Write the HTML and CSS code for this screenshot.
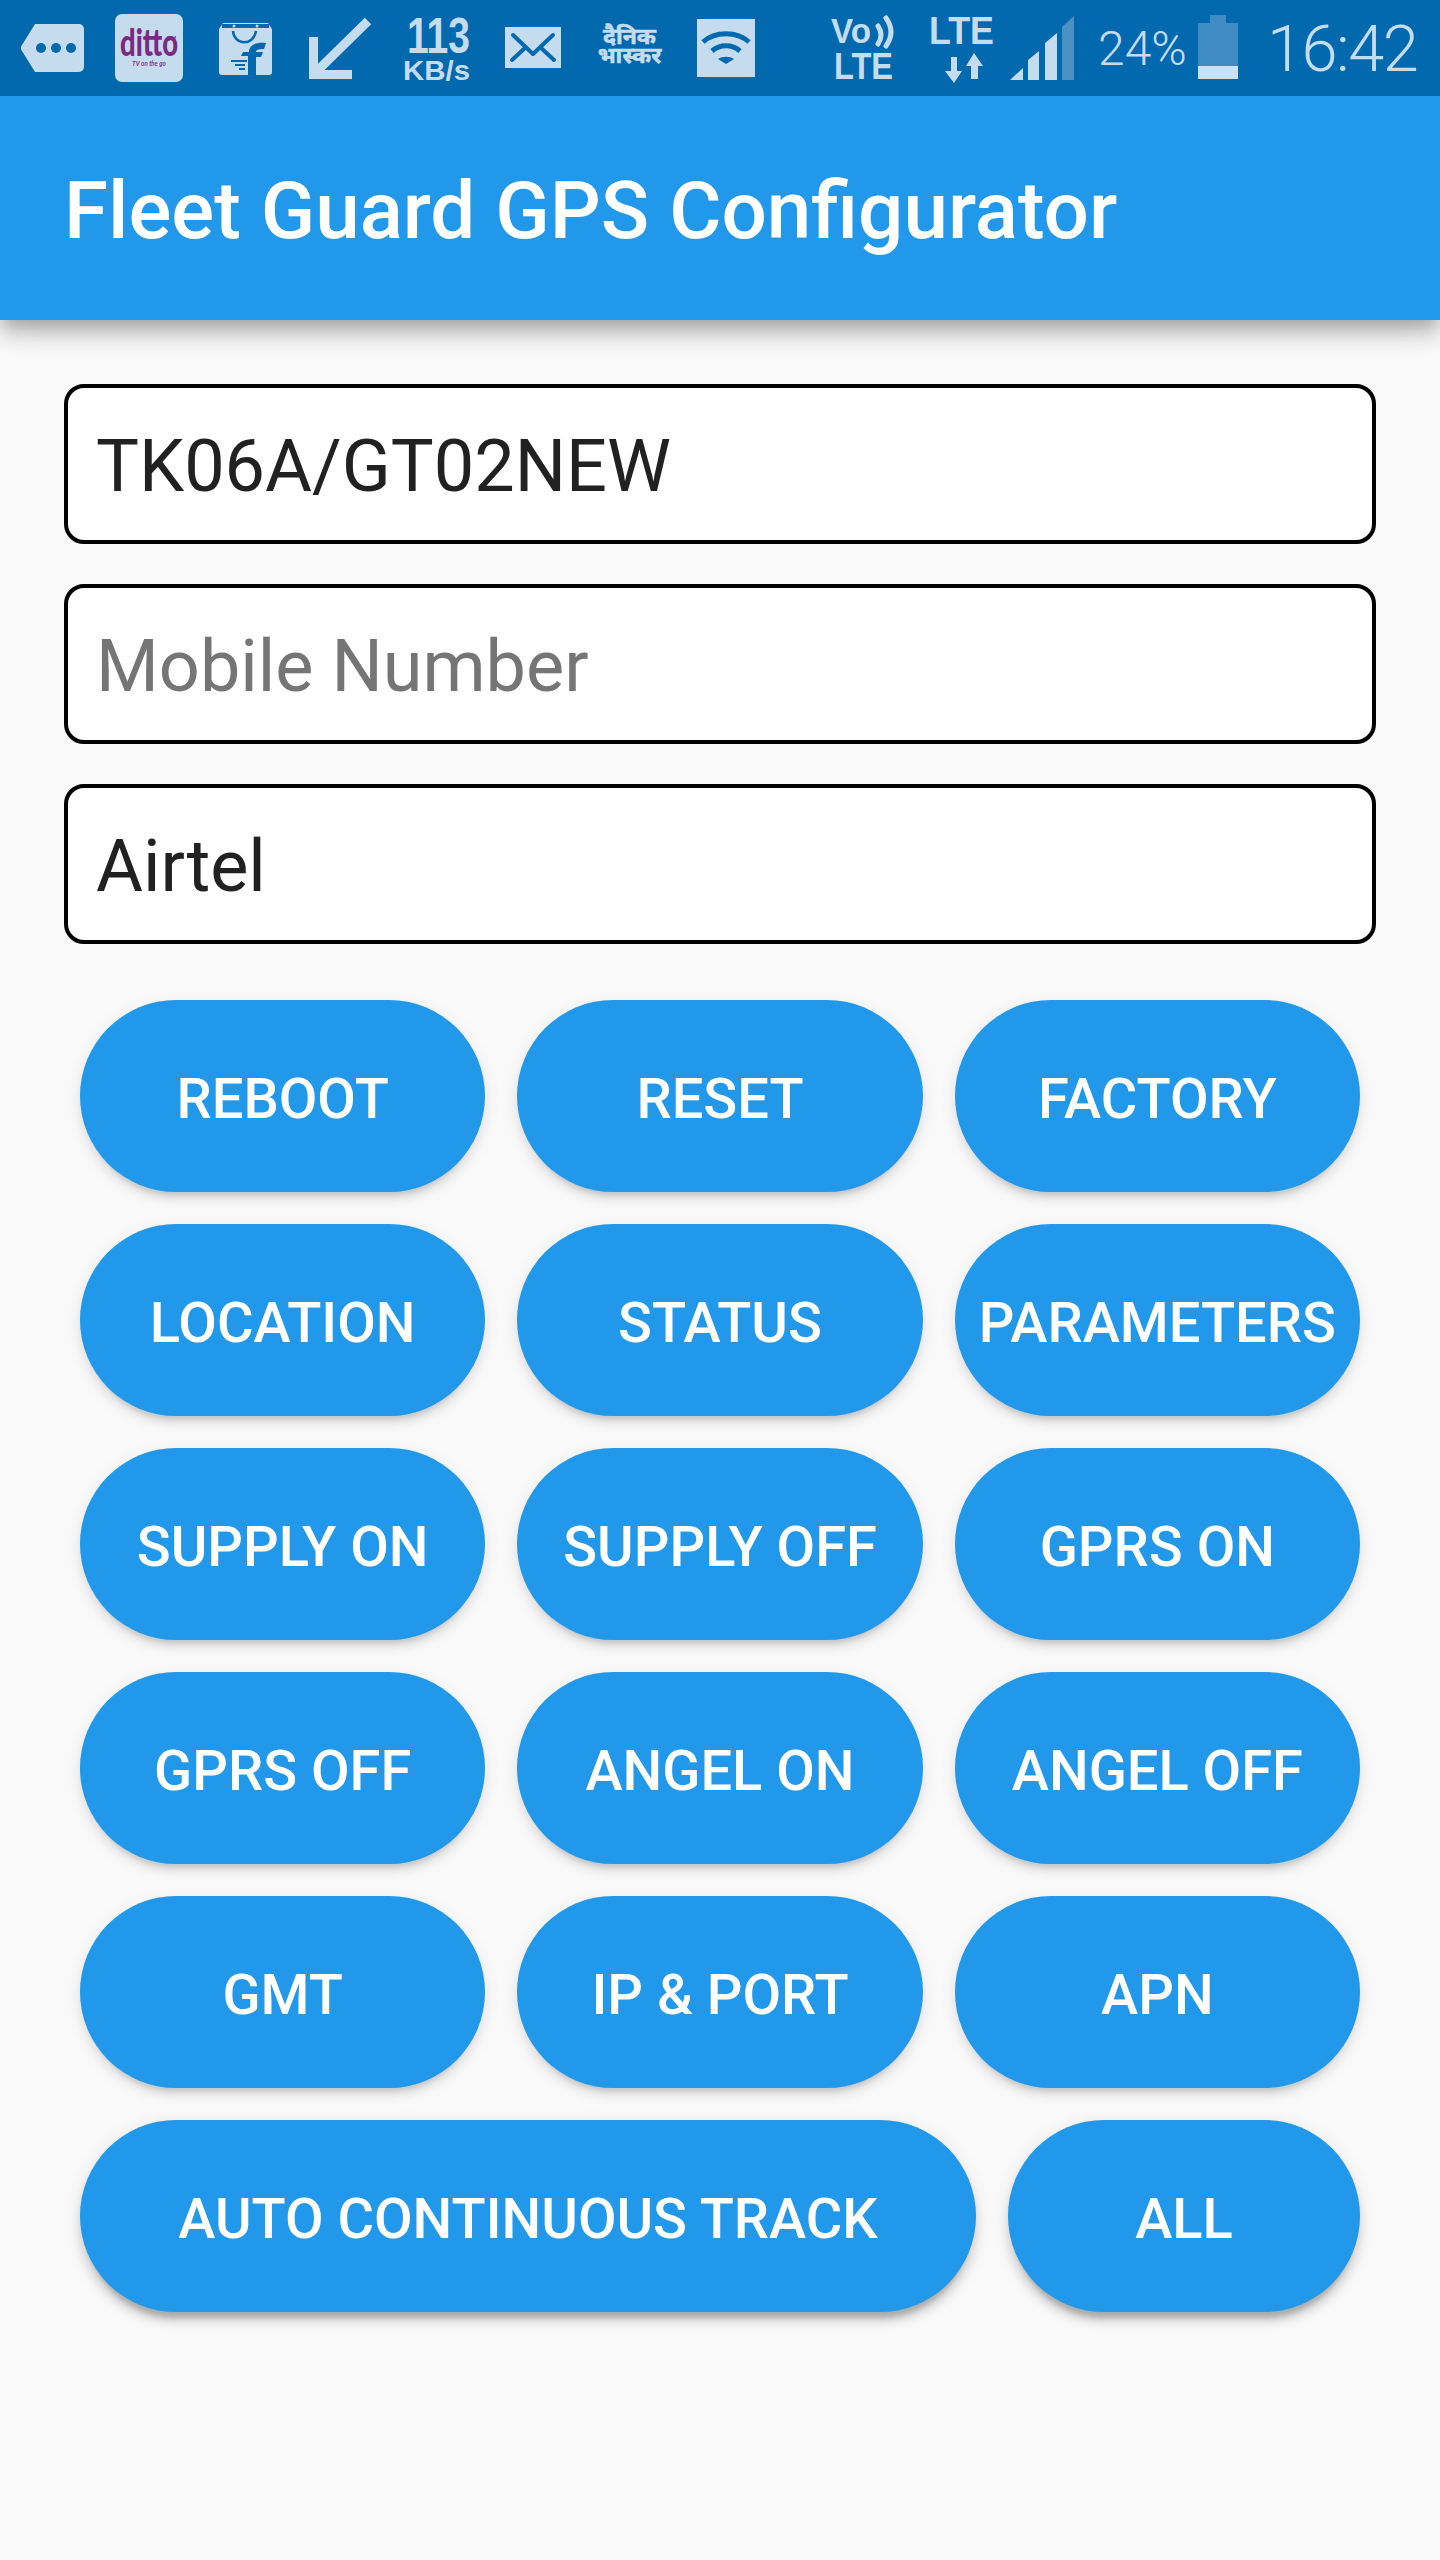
FILE: index.html
```html
<!DOCTYPE html>
<html lang="en">
<head>
<meta charset="utf-8">
<title>Fleet Guard GPS Configurator</title>
<link rel="stylesheet" href="styles.css">
</head>
<body>
<div class="status-bar">
  <svg class="si si-bubble" width="63" height="96" viewBox="0 0 63 96"><path class="lt" d="M14 24H58a5 5 0 0 1 5 5V67a5 5 0 0 1-5 5H14L1 51a5 5 0 0 1 0-6Z"/><circle class="dk" cx="20" cy="48" r="5"/><circle class="dk" cx="35" cy="48" r="5"/><circle class="dk" cx="50" cy="48" r="5"/></svg>
  <svg class="si si-ditto" width="68" height="96" viewBox="0 0 68 96"><rect class="lt" y="14" width="68" height="68" rx="7"/><text class="ditto" x="5" y="56" textLength="58" lengthAdjust="spacingAndGlyphs">ditto</text><text class="ditto-tv" x="52" y="41" textLength="9" lengthAdjust="spacingAndGlyphs">TV</text><text class="ditto-sub" x="17" y="66" textLength="34" lengthAdjust="spacingAndGlyphs">TV on the go</text></svg>
  <svg class="si si-flip" width="53" height="96" viewBox="0 0 53 96"><path class="lt" d="M0 29L4 23H49L53 29V72a3 3 0 0 1-3 3H3a3 3 0 0 1-3-3Z"/><path class="dk" d="M3 24H50V28H3Z"/><circle class="lt" cx="15" cy="26" r="1.5"/><circle class="lt" cx="38" cy="26" r="1.5"/><path class="dk-line" d="M14 31C15 46 35 46 37 31"/><path class="dk" d="M29 75V56H22L24 52H30C30 46 35 42 47 43L45 49C39 49 37 50 37 52H44L42 57H37V75Z"/><path class="dk" d="M12 60H28V62H12ZM16 64H26V66H16ZM20 68H26V70H20Z"/></svg>
  <svg class="si si-arrow" width="63" height="96" viewBox="0 0 63 96"><path class="lt-line" d="M4.500 37V74.500H43"/><path class="lt-line" d="M5 74L59 21"/></svg>
  <svg class="si si-speed" width="68" height="96" viewBox="0 0 68 96"><text class="speed-num" x="5" y="53" textLength="63" lengthAdjust="spacingAndGlyphs">113</text><text class="speed-unit" x="1" y="80" textLength="67" lengthAdjust="spacingAndGlyphs">KB/s</text></svg>
  <svg class="si si-mail" width="56" height="96" viewBox="0 0 56 96"><rect class="lt" y="27" width="56" height="41"/><path class="dk-thin" d="M8 35L28 54L48 35M7 60L21 47M49 60L35 47"/></svg>
  <div class="si si-dainik"><span>दैनिक</span><span>भास्कर</span></div>
  <svg class="si si-wifi" width="58" height="96" viewBox="0 0 58 96"><rect class="lt" y="19" width="58" height="58"/><path class="dk-arc" d="M6 42C18 31 40 31 52 42"/><path class="dk-arc" d="M15 51C23 44 35 44 43 51"/><path class="dk" d="M29 64L21 59C25 56 33 56 37 59Z"/></svg>
  <svg class="si si-volte" width="63" height="96" viewBox="0 0 63 96"><text class="bar-bold" x="0" y="43" font-size="35" textLength="40" lengthAdjust="spacingAndGlyphs">Vo</text><path class="lt-wave" d="M47 26Q53 35 47 44M55 18Q65 32 55 46"/><text class="bar-bold" x="3" y="79" font-size="36" textLength="59" lengthAdjust="spacingAndGlyphs">LTE</text></svg>
  <svg class="si si-lte" width="66" height="96" viewBox="0 0 66 96"><text class="bar-bold" x="0" y="44" font-size="39" textLength="65" lengthAdjust="spacingAndGlyphs">LTE</text><path class="lt" d="M22 57H28V71H33L25 83L16 71H22ZM45 53L54 66H49V79H42V66H37Z"/></svg>
  <svg class="si si-signal" width="64" height="96" viewBox="0 0 64 96"><path class="lt" d="M0 80L13 68V80ZM18 60L29 51V80H18ZM35 43L47 33V80H35Z"/><path class="dim" d="M52 27L64 16V80H52Z"/></svg>
  <span class="si si-pct">24%</span>
  <svg class="si si-batt" width="40" height="96" viewBox="0 0 40 96"><path class="dim-batt" d="M12 15H28V23H40V66H0V23H12Z"/><rect class="lt-batt" y="66" width="40" height="13"/></svg>
  <span class="si si-clock">16:42</span>
</div>

<header class="app-bar"><h1 class="app-title">Fleet Guard GPS Configurator</h1></header>

<main class="content">
  <div class="fields">
    <input class="field" type="text" value="TK06A/GT02NEW">
    <input class="field" type="text" placeholder="Mobile Number">
    <input class="field" type="text" value="Airtel">
  </div>
  <div class="buttons">
    <div class="btn-grid">
      <button class="btn">REBOOT</button>
      <button class="btn">RESET</button>
      <button class="btn">FACTORY</button>
      <button class="btn">LOCATION</button>
      <button class="btn">STATUS</button>
      <button class="btn">PARAMETERS</button>
      <button class="btn">SUPPLY ON</button>
      <button class="btn">SUPPLY OFF</button>
      <button class="btn">GPRS ON</button>
      <button class="btn">GPRS OFF</button>
      <button class="btn">ANGEL ON</button>
      <button class="btn">ANGEL OFF</button>
      <button class="btn">GMT</button>
      <button class="btn">IP &amp; PORT</button>
      <button class="btn">APN</button>
    </div>
    <div class="btn-row">
      <button class="btn">AUTO CONTINUOUS TRACK</button>
      <button class="btn">ALL</button>
    </div>
  </div>
</main>
</body>
</html>
```
FILE: styles.css
```css
* { box-sizing: border-box; }

html, body {
  margin: 0;
  padding: 0;
}

body {
  width: 1440px;
  height: 2560px;
  overflow: hidden;
  background: #fafafa;
  font-family: Roboto, "Noto Sans", sans-serif;
}

/* status bar */
.status-bar {
  display: flex;
  align-items: center;
  height: 96px;
  padding-left: 21px;
  background: #0269ae;
  color: #c5dcee;
  position: relative;
  z-index: 2;
}

.si { flex: none; display: block; overflow: visible; }
.si-ditto { margin-left: 31px; }
.si-flip { margin-left: 36px; }
.si-arrow { margin-left: 37px; }
.si-speed { margin-left: 30px; }
.si-mail { margin-left: 35px; }
.si-dainik { margin-left: 36px; }
.si-wifi { margin-left: 35px; }
.si-volte { margin-left: 76px; }
.si-lte { margin-left: 35px; }
.si-signal { margin-left: 15px; }
.si-pct { margin-left: 24px; }
.si-batt { margin-left: 13px; }
.si-clock { margin-left: 29px; }

.lt { fill: #c5dcee; }
.dk { fill: #0269ae; }
.dim { fill: #4b90c3; }
.dim-batt { fill: #3f8cc4; }
.lt-batt { fill: #cce1f1; }
.lt-line { fill: none; stroke: #c5dcee; stroke-width: 9; }
.lt-wave { fill: none; stroke: #c5dcee; stroke-width: 5; stroke-linecap: round; }
.dk-line { fill: none; stroke: #0269ae; stroke-width: 2.500; }
.dk-thin { fill: none; stroke: #0269ae; stroke-width: 4; stroke-linecap: round; stroke-linejoin: round; }
.dk-arc { fill: none; stroke: #0269ae; stroke-width: 5; }

.ditto { font: 900 37px Lato, Roboto, sans-serif; fill: #7c2a80; }
.ditto-tv { font: 700 7px Roboto, sans-serif; fill: #7c2a80; }
.ditto-sub { font: italic 500 8px Roboto, sans-serif; fill: #7c2a80; }
.speed-num { font: 700 50px "Liberation Sans", sans-serif; fill: #c5dcee; }
.speed-unit { font: 700 28px "Liberation Sans", sans-serif; fill: #c5dcee; }
.bar-bold { font-family: "Liberation Sans", sans-serif; font-weight: 700; fill: #c5dcee; }

.si-dainik {
  width: 65px;
  display: flex;
  flex-direction: column;
  align-items: center;
  font: 700 23px/19px "Noto Sans Devanagari", "Noto Sans", sans-serif;
  white-space: nowrap;
  -webkit-text-stroke: .6px #c5dcee;
}

.si-pct {
  width: 87px;
  font-weight: 300;
  font-size: 48px;
  line-height: 1;
  white-space: nowrap;
  transform: translateY(1px);
}

.si-clock {
  width: 148px;
  font-weight: 300;
  font-size: 65px;
  line-height: 1;
  white-space: nowrap;
  letter-spacing: -1.500px;
  transform: translateY(1px);
}

/* app bar */
.app-bar {
  height: 224px;
  display: flex;
  align-items: center;
  padding: 6px 0 0 64px;
  background: #2198e9;
  box-shadow: 0 8px 16px -4px rgba(0, 0, 0, .2), 0 16px 20px rgba(0, 0, 0, .14), 0 4px 40px rgba(0, 0, 0, .12);
  position: relative;
  z-index: 1;
}

.app-title {
  margin: 0;
  color: #fff;
  font-size: 80px;
  font-weight: 500;
  line-height: 1;
}

/* fields */
.content {
  padding: 64px 64px 0;
}

.fields {
  display: flex;
  flex-direction: column;
  gap: 40px;
}

.field {
  display: block;
  width: 100%;
  height: 160px;
  padding: 5px 28px 0;
  border: 4px solid #000;
  border-radius: 20px;
  background: #fff;
  color: #212121;
  font-family: Roboto, sans-serif;
  font-size: 72px;
  outline: none;
}

.field::placeholder {
  color: #757575;
  opacity: 1;
}

/* buttons */
.buttons {
  display: flex;
  flex-direction: column;
  gap: 32px;
  padding: 56px 16px 0;
}

.btn-grid {
  display: grid;
  grid-template-columns: repeat(3, 1fr);
  gap: 32px;
}

.btn-row {
  display: grid;
  grid-template-columns: 1fr 352px;
  gap: 32px;
}

.btn {
  height: 192px;
  padding: 5px 0 0;
  border: 0;
  border-radius: 96px;
  background: #2198e9;
  color: #fff;
  font-family: Roboto, sans-serif;
  font-size: 56px;
  font-weight: 500;
  white-space: nowrap;
  box-shadow: 0 12px 4px -8px rgba(0, 0, 0, .1), 0 8px 8px rgba(0, 0, 0, .06), 0 4px 20px rgba(0, 0, 0, .08);
}

.btn-row .btn {
  box-shadow: 0 12px 4px -6px rgba(0, 0, 0, .16), 0 10px 10px rgba(0, 0, 0, .12), 0 4px 20px rgba(0, 0, 0, .1);
}
```
